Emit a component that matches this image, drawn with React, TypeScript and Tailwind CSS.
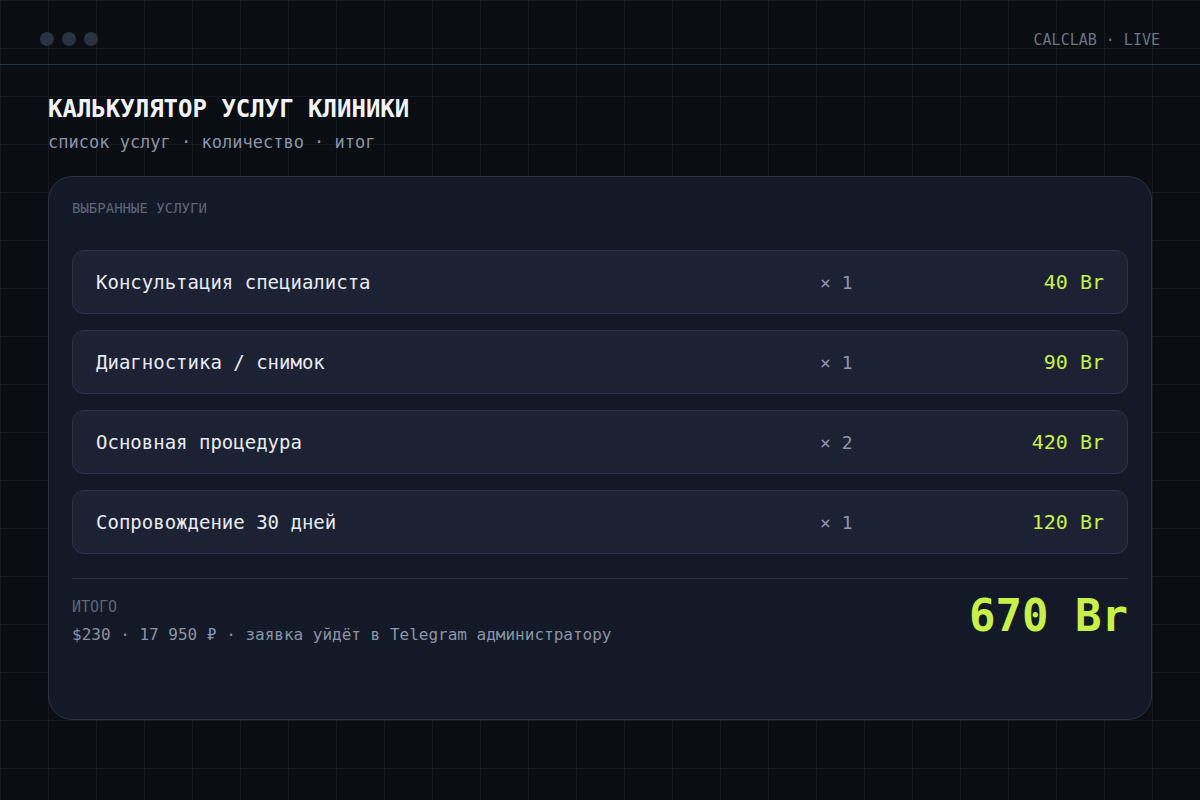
import React from "react";

type Service = { name: string; qty: number; price: number };

const services: Service[] = [
  { name: "Консультация специалиста", qty: 1, price: 40 },
  { name: "Диагностика / снимок", qty: 1, price: 90 },
  { name: "Основная процедура", qty: 2, price: 420 },
  { name: "Сопровождение 30 дней", qty: 1, price: 120 },
];

export default function App() {
  const total = services.reduce((s, x) => s + x.price, 0);

  return (
    <div className="w-[1200px] h-[800px] overflow-hidden bg-[#0a0d12] bg-[linear-gradient(to_right,#141922_1px,transparent_1px),linear-gradient(to_bottom,#141922_1px,transparent_1px)] bg-[size:48px_48px] font-['DejaVu_Sans_Mono',monospace]">
      {/* top bar */}
      <header className="h-[65px] border-b border-[#2a3344] px-10 pt-8">
        <div className="flex items-center justify-between h-[14px]">
          <div className="flex gap-2">
            <span className="w-[14px] h-[14px] rounded-full bg-[#2a3142]" />
            <span className="w-[14px] h-[14px] rounded-full bg-[#2a3142]" />
            <span className="w-[14px] h-[14px] rounded-full bg-[#2a3142]" />
          </div>
          <span className="mt-[2px] text-[15px] leading-[14px] text-[#6b7385]">CALCLAB · LIVE</span>
        </div>
      </header>

      <main className="px-12 pt-[28px]">
        <h1 className="text-[24px] leading-8 font-bold text-[#f1f3f7]">КАЛЬКУЛЯТОР УСЛУГ КЛИНИКИ</h1>
        <p className="mt-[5px] text-[17px] leading-6 text-[#8c95a8]">список услуг · количество · итог</p>

        <section className="mt-[22px] h-[544px] rounded-[24px] border border-[#2a3244] bg-[#131926] px-[23px] pt-[23px]">
          <div className="text-[14px] leading-4 text-[#5d6578]">ВЫБРАННЫЕ УСЛУГИ</div>

          <div className="mt-[34px] flex flex-col gap-4">
            {services.map((s) => (
              <div
                key={s.name}
                className="h-16 flex items-center rounded-xl border border-[#2b3346] bg-[#1c2233] px-[23px]"
              >
                <span className="flex-1 text-[19px] text-[#e8ebf1]">{s.name}</span>
                <span className="w-[164px] text-[18px] text-[#8e97aa]">× {s.qty}</span>
                <span className="w-[120px] text-right text-[20px] text-[#c8f04b]">{s.price} Br</span>
              </div>
            ))}
          </div>

          <div className="mt-6 border-t border-[#2a3244] pt-5 flex items-start justify-between">
            <div>
              <div className="text-[15px] leading-4 text-[#5d6578]">ИТОГО</div>
              <div className="mt-2 text-[16px] leading-6 text-[#8b93a6]">
                $230 · 17 950 ₽ · заявка уйдёт в Telegram администратору
              </div>
            </div>
            <div className="-mt-[6px] text-[44px] leading-[45px] font-bold text-[#c8f04b]">{total} Br</div>
          </div>
        </section>
      </main>
    </div>
  );
}
